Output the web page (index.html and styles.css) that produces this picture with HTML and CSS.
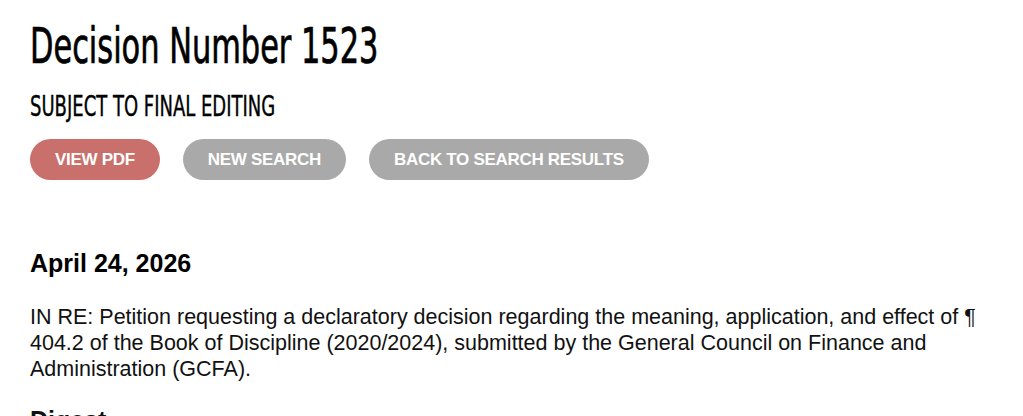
FILE: index.html
```html
<!DOCTYPE html>
<html lang="en">
<head>
<meta charset="utf-8">
<title>Decision Number 1523</title>
<link rel="stylesheet" href="styles.css">
</head>
<body>
<main class="page">
  <h1 class="title"><span class="narrow">Decision Number 1523</span></h1>
  <p class="subtitle"><span class="narrow">SUBJECT TO FINAL EDITING</span></p>
  <div class="actions">
    <a class="btn btn-primary" href="#">VIEW PDF</a>
    <a class="btn btn-muted" href="#">NEW SEARCH</a>
    <a class="btn btn-muted" href="#">BACK TO SEARCH RESULTS</a>
  </div>
  <h2 class="date">April 24, 2026</h2>
  <p class="body">IN RE: Petition requesting a declaratory decision regarding the meaning, application, and effect of ¶ 404.2 of the Book of Discipline (2020/2024), submitted by the General Council on Finance and Administration (GCFA).</p>
  <h3 class="section">Digest</h3>
</main>
</body>
</html>
```
FILE: styles.css
```css
html, body {
  margin: 0;
  padding: 0;
  background: #ffffff;
}
body {
  font-family: "Liberation Sans", Arial, sans-serif;
  color: #111111;
}
.page {
  padding: 0 30px;
  max-width: 963px;
}
.title {
  margin: 0;
  padding-top: 17px;
  height: 60px;
  font-family: "DejaVu Sans Condensed", "DejaVu Sans", sans-serif;
  font-weight: 400;
  font-size: 49px;
  line-height: 60px;
  color: #000;
  white-space: nowrap;
  -webkit-text-stroke: 0.7px #000;
}
.title .narrow {
  display: inline-block;
  transform: scaleX(0.69);
  transform-origin: left center;
}
.subtitle {
  margin: 13px 0 0;
  font-family: "DejaVu Sans Condensed", "DejaVu Sans", sans-serif;
  font-size: 29px;
  line-height: 32px;
  color: #000;
  white-space: nowrap;
  -webkit-text-stroke: 0.4px #000;
}
.subtitle .narrow {
  display: inline-block;
  transform: scaleX(0.69);
  transform-origin: left center;
}
.actions {
  display: flex;
  gap: 23px;
  margin-top: 17px;
}
.btn {
  display: inline-flex;
  align-items: center;
  justify-content: center;
  height: 41px;
  padding: 0 25px;
  border-radius: 21px;
  font-weight: 700;
  font-size: 17px;
  color: #ffffff;
  text-decoration: none;
  letter-spacing: -0.3px;
}
.btn-primary { background: #c9706d; }
.btn-muted { background: #a9a9a9; }
.date {
  margin: 68px 0 0;
  font-size: 25px;
  line-height: 30px;
  font-weight: 700;
  color: #000;
}
.body {
  margin: 26px 0 0;
  font-size: 21.5px;
  line-height: 26px;
}
.section {
  margin: 24px 0 0;
  font-size: 25px;
  font-weight: 700;
}
```
